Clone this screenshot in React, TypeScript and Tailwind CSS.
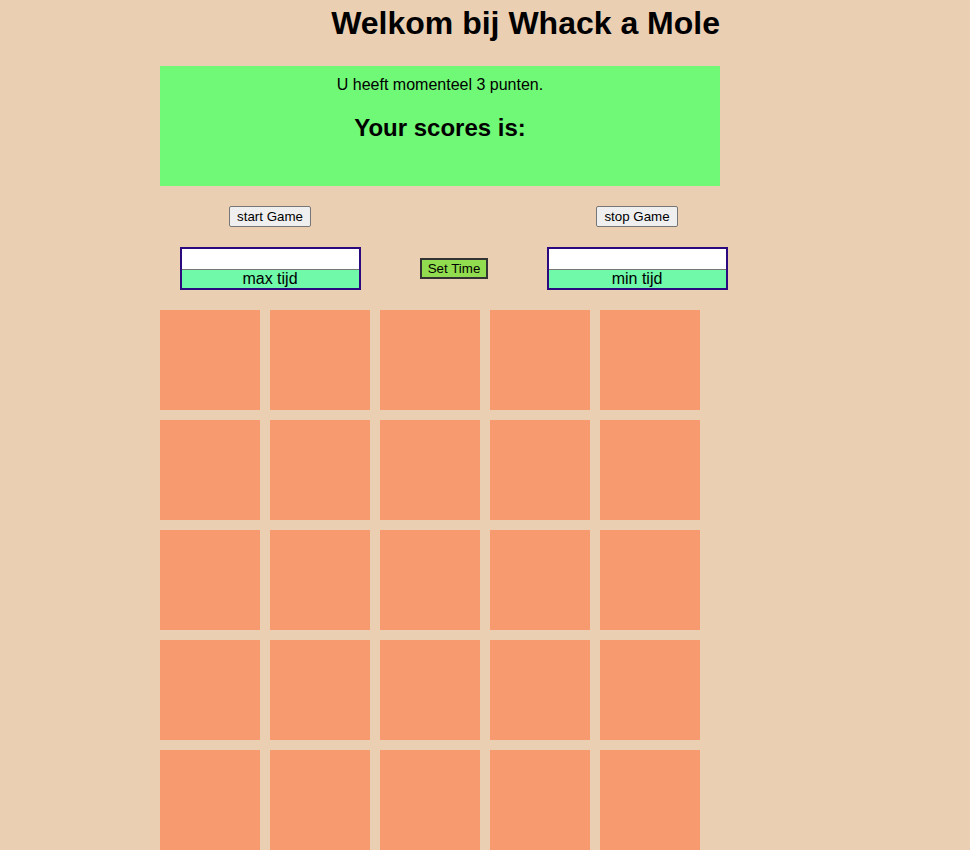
import React from "react";

function TimeBox({ label }: { label: string }) {
  return (
    <div className="w-[181px] h-[43px] border-2 border-[#2a0a7e] bg-[#6ff9a9] flex flex-col">
      <input
        type="text"
        className="h-[21px] w-full bg-white border-b border-[#767676] outline-none"
      />
      <div className="text-[16px] leading-[18px] text-center text-black">{label}</div>
    </div>
  );
}

export default function App() {
  const cells = Array.from({ length: 25 }, (_, i) => i);
  return (
    <div
      className="min-h-[850px] bg-[#ebcfb3] text-black"
      style={{ fontFamily: '"Liberation Sans", Arial, sans-serif' }}
    >
      <div className="w-[560px] ml-[160px]">
        <h1 className="text-[32px] font-bold leading-[37px] pt-[5px] text-right">
          Welkom bij Whack a Mole
        </h1>
        <div className="mt-[24px] h-[120px] bg-[#6ff976] pt-[10px] text-center">
          <p className="text-[16px] leading-[18px]">U heeft momenteel 3 punten.</p>
          <h2 className="mt-[20px] text-[24px] leading-[28px] font-bold">Your scores is:</h2>
        </div>
      </div>

      <div className="flex ml-[178px] w-[552px] mt-[20px]">
        <div className="w-[184px] flex flex-col items-center">
          <button className="h-[21px] px-[7px] text-[13.33px] leading-[15px] bg-[#efefef] border border-[#767676] rounded-[2px]">
            start Game
          </button>
          <div className="mt-[20px]">
            <TimeBox label="max tijd" />
          </div>
        </div>
        <div className="w-[184px] flex flex-col items-center">
          <div className="h-[21px]" />
          <button className="mt-[31px] h-[21px] px-[6px] text-[13.33px] leading-[15px] bg-[#92dc4f] border-2 border-[#333333]">
            Set Time
          </button>
        </div>
        <div className="w-[182px] flex flex-col items-center">
          <button className="h-[21px] px-[7px] text-[13.33px] leading-[15px] bg-[#efefef] border border-[#767676] rounded-[2px]">
            stop Game
          </button>
          <div className="mt-[20px]">
            <TimeBox label="min tijd" />
          </div>
        </div>
      </div>

      <div className="ml-[160px] mt-[20px] grid grid-cols-[repeat(5,100px)] gap-[10px] pb-[10px]">
        {cells.map((i) => (
          <div key={i} className="w-[100px] h-[100px] bg-[#f79a6f]" />
        ))}
      </div>
    </div>
  );
}
